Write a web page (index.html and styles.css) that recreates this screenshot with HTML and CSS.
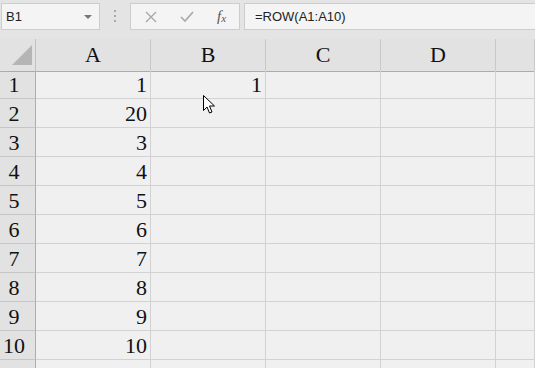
FILE: index.html
```html
<!DOCTYPE html>
<html>
  <head>
    <title>Sheet</title>
    <link rel="stylesheet" href="styles.css">
  </head>
  <body>
    <div class="toolbar">
      <div class="namebox">
        <span>B1</span>
        <span class="drop"></span>
      </div>
      <div class="grip"><i></i><i></i><i></i></div>
      <div class="buttons">
        <svg width="14" height="14" viewBox="0 0 14 14"><path d="M2 2 L12 12 M12 2 L2 12" stroke="#a8a8a8" stroke-width="1.4" fill="none"/></svg>
        <svg width="16" height="14" viewBox="0 0 16 14"><path d="M2 7 L6 11 L14 2" stroke="#a8a8a8" stroke-width="1.6" fill="none"/></svg>
        <span class="fx">f<sub>x</sub></span>
      </div>
      <div class="formula">=ROW(A1:A10)</div>
    </div>

    <div class="sheet">
      <div class="row head">
        <div class="corner"><span class="tri"></span></div>
        <div class="col">A</div>
        <div class="col">B</div>
        <div class="col">C</div>
        <div class="col">D</div>
        <div class="col"></div>
      </div>
      <div class="row"><div class="rh">1</div><div class="cell">1</div><div class="cell">1</div><div class="cell"></div><div class="cell"></div><div class="cell"></div></div>
      <div class="row"><div class="rh">2</div><div class="cell">20</div><div class="cell"></div><div class="cell"></div><div class="cell"></div><div class="cell"></div></div>
      <div class="row"><div class="rh">3</div><div class="cell">3</div><div class="cell"></div><div class="cell"></div><div class="cell"></div><div class="cell"></div></div>
      <div class="row"><div class="rh">4</div><div class="cell">4</div><div class="cell"></div><div class="cell"></div><div class="cell"></div><div class="cell"></div></div>
      <div class="row"><div class="rh">5</div><div class="cell">5</div><div class="cell"></div><div class="cell"></div><div class="cell"></div><div class="cell"></div></div>
      <div class="row"><div class="rh">6</div><div class="cell">6</div><div class="cell"></div><div class="cell"></div><div class="cell"></div><div class="cell"></div></div>
      <div class="row"><div class="rh">7</div><div class="cell">7</div><div class="cell"></div><div class="cell"></div><div class="cell"></div><div class="cell"></div></div>
      <div class="row"><div class="rh">8</div><div class="cell">8</div><div class="cell"></div><div class="cell"></div><div class="cell"></div><div class="cell"></div></div>
      <div class="row"><div class="rh">9</div><div class="cell">9</div><div class="cell"></div><div class="cell"></div><div class="cell"></div><div class="cell"></div></div>
      <div class="row"><div class="rh">10</div><div class="cell">10</div><div class="cell"></div><div class="cell"></div><div class="cell"></div><div class="cell"></div></div>
      <div class="row"><div class="rh"></div><div class="cell"></div><div class="cell"></div><div class="cell"></div><div class="cell"></div><div class="cell"></div></div>

      <!-- mouse pointer over B2 -->
      <svg class="pointer" width="13" height="20" viewBox="0 0 13 20">
        <path d="M0.5 0.5 L0.5 15.5 L4 12 L6.5 18 L9 17 L6.5 11 L11.5 11 Z" fill="#fff" stroke="#000" stroke-width="1"/>
      </svg>
    </div>
  </body>
</html>
```

FILE: styles.css
```css
body {
  margin: 0;
  height: 368px;
  background: #f0f0f0;
  overflow: hidden;
  font-family: "Liberation Sans", Arial, sans-serif;
}
.toolbar {
  display: flex;
  align-items: flex-start;
  height: 39px;
  padding-top: 3px;
  box-sizing: border-box;
  background: #e4e4e4;
}
.namebox,
.buttons,
.formula {
  height: 27px;
  box-sizing: border-box;
  border: 1px solid #cdcdcd;
  background: #f4f4f4;
}
.namebox {
  display: flex;
  align-items: center;
  justify-content: space-between;
  width: 99px;
  margin-left: 1px;
  padding: 0 7px 0 4px;
  font-size: 13px;
  color: #222;
}
.drop {
  width: 0;
  height: 0;
  border-left: 4px solid transparent;
  border-right: 4px solid transparent;
  border-top: 4px solid #777;
}
.grip {
  width: 30px;
  display: flex;
  flex-direction: column;
  align-items: center;
  gap: 3px;
  padding-top: 7px;
}
.grip i {
  width: 2px;
  height: 2px;
  background: #a8a8a8;
}
.buttons {
  display: flex;
  align-items: center;
  width: 110px;
  padding-left: 13px;
  gap: 21px;
}
.fx {
  font-family: "Liberation Serif", serif;
  font-style: italic;
  font-size: 15px;
  color: #555;
  margin-left: 1px;
}
.fx sub {
  font-size: 11px;
  vertical-align: -1px;
}
.formula {
  flex: 1;
  margin-left: 4px;
  border-right: none;
  padding-left: 10px;
  line-height: 25px;
  font-size: 13px;
  color: #222;
}
.sheet {
  position: relative;
  height: 329px;
  overflow: hidden;
  font-family: "Liberation Serif", "Times New Roman", serif;
  font-size: 22px;
  color: #111;
}
.row {
  display: grid;
  grid-template-columns: 36px 115px 115px 115px 115px 1fr;
  height: 29px;
}
.row.head {
  height: 31px;
}
.corner,
.col {
  background: #e2e2e2;
  border-bottom: 1px solid #ababab;
  box-sizing: border-box;
}
.corner {
  border-right: 1px solid #c2c2c2;
  position: relative;
}
.tri {
  position: absolute;
  left: 12px;
  top: 6px;
  width: 0;
  height: 0;
  border-left: 20px solid transparent;
  border-bottom: 20px solid #b5b5b5;
}
.col {
  border-right: 1px solid #c8c8c8;
  text-align: center;
  line-height: 32px;
}
.rh {
  background: #e2e2e2;
  border-right: 1px solid #adadad;
  border-bottom: 1px solid #c6c6c6;
  box-sizing: border-box;
  padding: 2px 7px 0 0;
  text-align: center;
  line-height: 26px;
}
.cell {
  border-right: 1px solid #d2d2d2;
  border-bottom: 1px solid #d2d2d2;
  box-sizing: border-box;
  padding: 2px 3px 0 0;
  text-align: right;
  line-height: 26px;
}
.pointer {
  position: absolute;
  left: 203px;
  top: 56px;
}
```
